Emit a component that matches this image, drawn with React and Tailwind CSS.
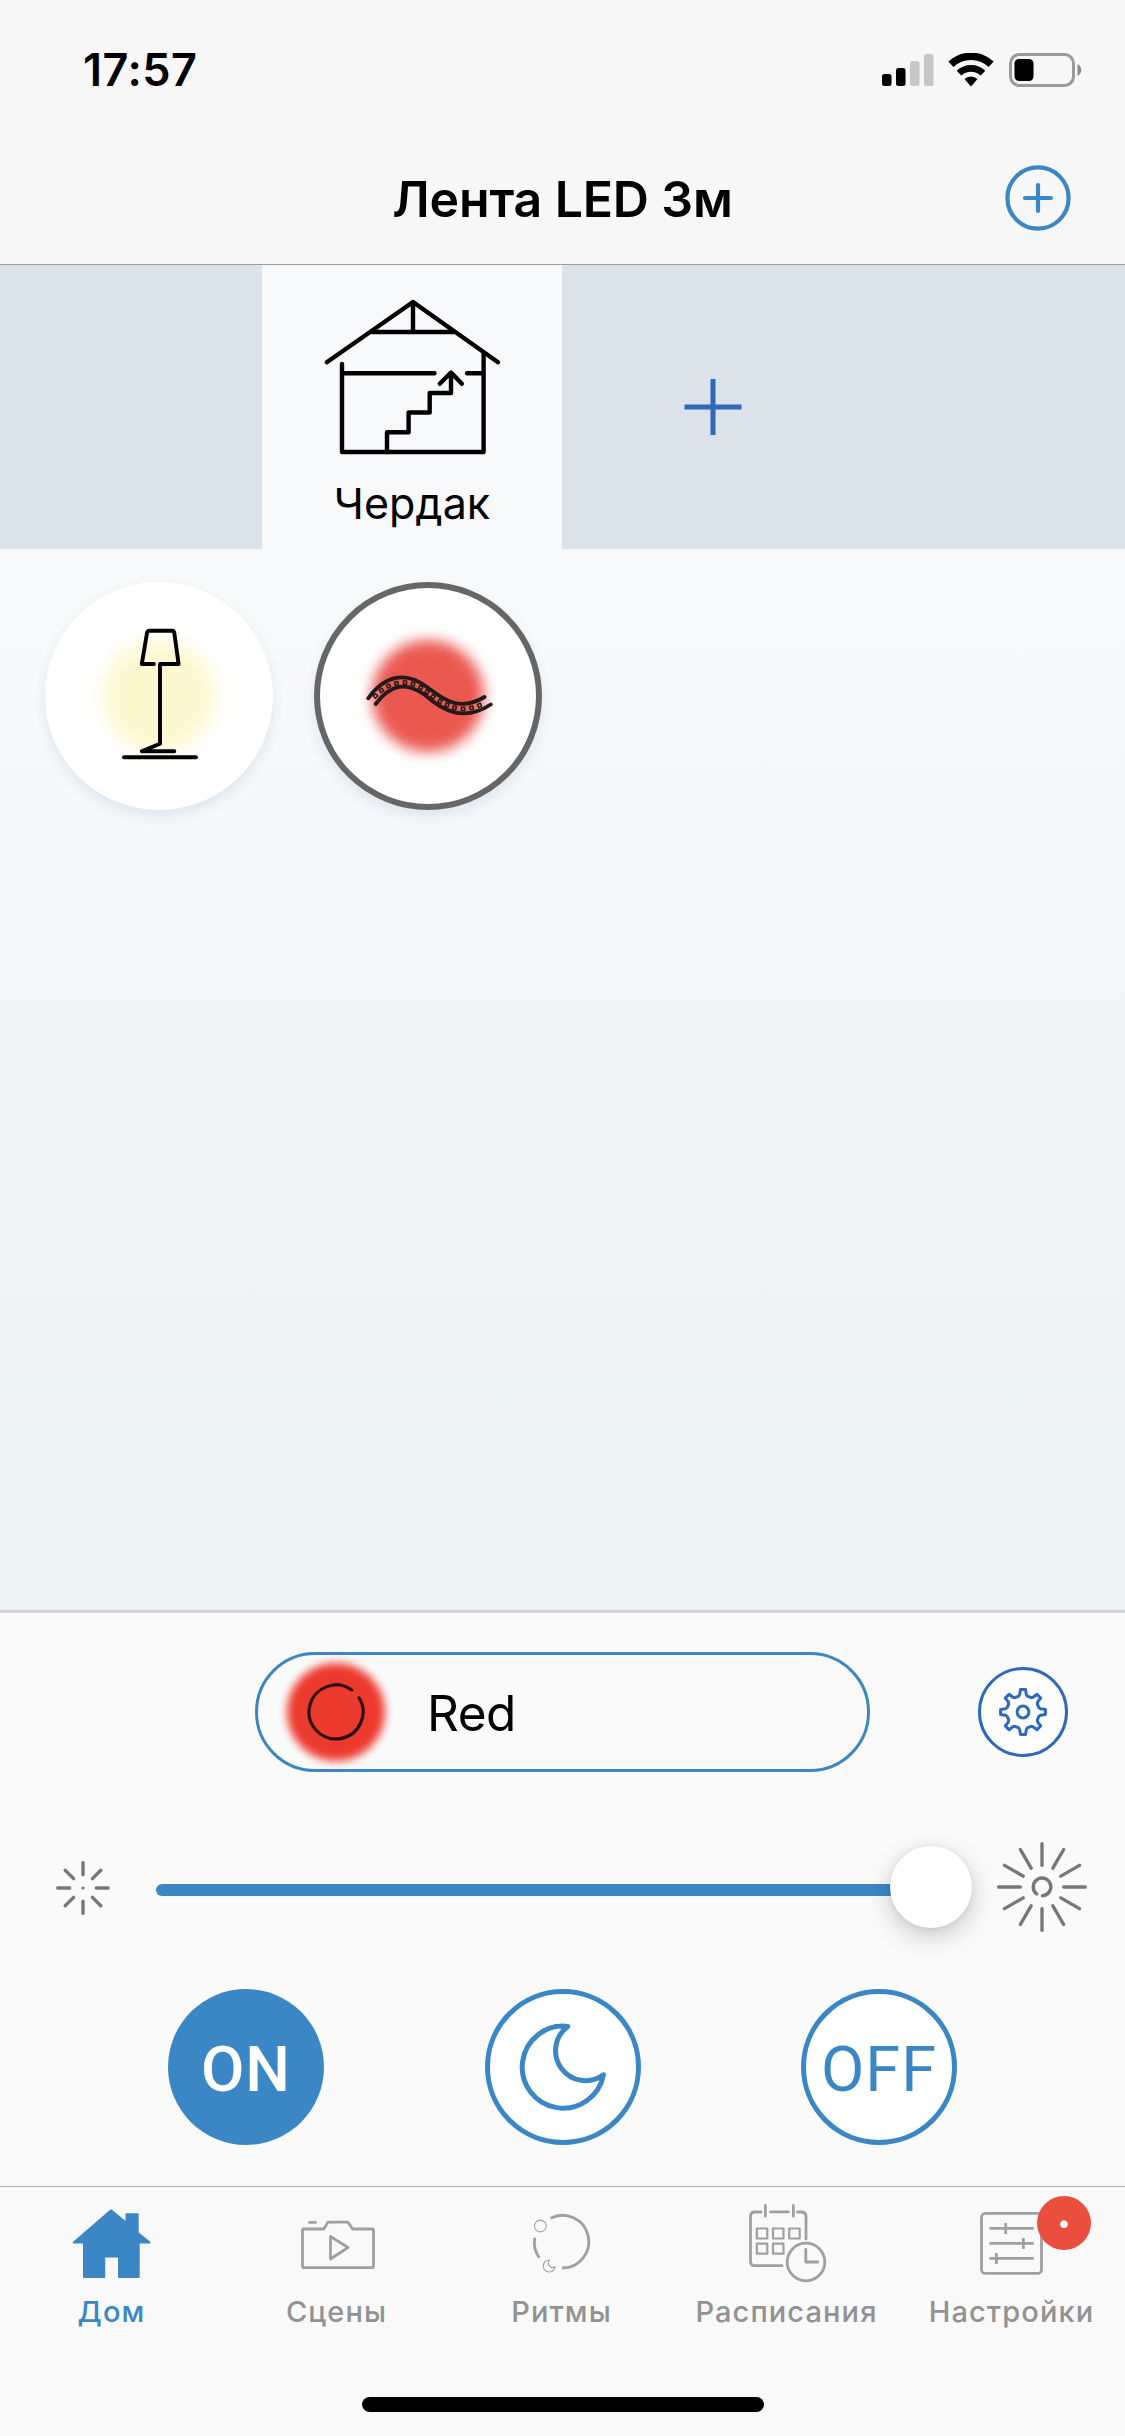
import { useState } from "react";

const gearPath = (() => {
  const pts = [];
  for (let i = 0; i < 8; i++) {
    const a = (i * Math.PI) / 4;
    // base, side, tip, tip, side, base of one tooth
    [[4.4, 15.8], [3.3, 17.5], [2.6, 22.4], [-2.6, 22.4], [-3.3, 17.5], [-4.4, 15.8]].forEach(([x, y]) => {
      pts.push(`${(x * Math.cos(a) - y * Math.sin(a)).toFixed(2)} ${(x * Math.sin(a) + y * Math.cos(a)).toFixed(2)}`);
    });
  }
  return `M${pts.join("L")}Z`;
})();

function Rays({ count, inner, outer }) {
  return Array.from({ length: count }, (_, i) => (
    <line key={i} x1="0" y1={-inner} x2="0" y2={-outer} transform={`rotate(${(i * 360) / count})`} />
  ));
}

function StatusBar() {
  return (
    <div className="flex h-[132px] items-center justify-between pt-[7px] pr-[43px] pl-[83px]">
      <span className="text-[45px] leading-none font-semibold tracking-[0.5px]">17:57</span>
      <div className="flex items-center">
        <svg width="52" height="34" viewBox="0 0 52 34">
          <rect x="0" y="21" width="9.5" height="12" rx="2.5" />
          <rect x="14" y="15" width="9.5" height="18" rx="2.5" />
          <rect x="28" y="8" width="9.5" height="25" rx="2.5" fill="#c6c6c6" />
          <rect x="42" y="1" width="9.5" height="32" rx="2.5" fill="#c6c6c6" />
        </svg>
        <svg className="ml-[14px]" width="46" height="34" viewBox="0 0 46 34" fill="none" stroke="#000">
          <path d="M2.9 11.3A29.3 29.3 0 0 1 43.1 11.3" strokeWidth="7.4" />
          <path d="M11 20.2A17.3 17.3 0 0 1 35 20.2" strokeWidth="6.6" />
          <path d="M23 33.4L16.5 26A9.6 9.6 0 0 1 29.5 26Z" fill="#000" stroke="none" />
        </svg>
        <svg className="ml-[15px]" width="73" height="34" viewBox="0 0 73 34">
          <rect x="1.5" y="1.5" width="63" height="31" rx="9" fill="none" stroke="#9a9a9a" strokeWidth="3" />
          <rect x="5.5" y="6" width="19" height="22" rx="4.5" />
          <path d="M68.5 11c5 2.500 5 9.500 0 12z" fill="#8a8a8a" />
        </svg>
      </div>
    </div>
  );
}

function AtticIcon() {
  return (
    <svg width="182" height="160" viewBox="321 298 182 160" fill="none" stroke="#000" strokeWidth="4.400" strokeLinecap="round" strokeLinejoin="round">
      <path d="M326.800 362.300L413 302L498 362.300M372 332H455M413 302V332" />
      <path d="M342 364V452H483.600V353M342 373.300H434.500M467 373.300H483.600" />
      <path d="M387 452V432.300H408.600V412.500H429.700V393H451V373M439.800 383.800L451 372.500L461.800 383.800" />
    </svg>
  );
}

function LampIcon() {
  return (
    <svg className="relative" width="80" height="136" viewBox="119 628 80 136" fill="none" stroke="#000" strokeWidth="3.900" strokeLinecap="round" strokeLinejoin="round">
      <path d="M153.900 664H141.800L147 633Q147.500 630.700 149.500 630.700H172Q174 630.700 174.300 633L178.600 664H160V743.700L141.800 751.300H174.300" />
      <path d="M124 757.300H196" />
    </svg>
  );
}

const ledDots = [
  [375.5, 696, -42], [381.5, 690.5, -38], [388.5, 686, -28], [396.5, 683.5, -14], [405, 682.7, 0],
  [413, 684, 12], [420.8, 687.5, 24], [427, 691.8, 32], [433, 696.8, 36], [440, 701.3, 30],
  [447, 705, 20], [454.5, 707.8, 10], [463, 708.9, 0], [471.5, 707.8, -10], [479.5, 705.3, -22],
];

function StripIcon() {
  return (
    <svg className="relative" width="130" height="44" viewBox="363 674 130 44" fill="none" stroke="#231a1a" strokeWidth="3.800" strokeLinecap="round" strokeLinejoin="round">
      <path d="M368.200 698.300C385 675 406 671 427 687C446 702 461 711 484.500 697" />
      <path d="M375.700 704C391 684 406 681.500 425 695C443 711 464 722 490.700 704.500" />
      {ledDots.map(([x, y, r]) => (
        <rect key={x} x={x - 1.6} y={y - 1.6} width="3.200" height="3.200" strokeWidth="1.500" transform={`rotate(${r} ${x} ${y})`} />
      ))}
    </svg>
  );
}

function Device({ selected, glow, onClick, children }) {
  return (
    <button
      onClick={onClick}
      className={`relative flex size-[228px] items-center justify-center rounded-full bg-white shadow-[0_6px_12px_#dde7ee] ${
        selected ? "border-[6px] border-[#666]" : ""
      }`}
    >
      <span className={`absolute size-[112px] rounded-full ${glow}`} />
      {children}
    </button>
  );
}

const tabs = [
  {
    label: "Дом",
    icon: (
      <g fill="currentColor" stroke="currentColor" strokeWidth="2" strokeLinejoin="round">
        <path d="M111 2210.300L126.500 2223V2214.200H137.700V2232.800L149.500 2242.500H138.700V2277H119V2256.500H104.200V2277H84V2242.500H73.800Z" />
      </g>
    ),
    x: 0,
  },
  {
    label: "Сцены",
    icon: (
      <>
        <path d="M303.500 2229H323.700L328 2222.200H348L352.700 2229H372.500Q373.500 2229 373.500 2230V2266.500Q373.500 2267.600 372.500 2267.600H303.500Q302.500 2267.600 302.500 2266.500V2230Q302.500 2229 303.500 2229Z" />
        <path d="M309.500 2222.400H315.500M330.500 2236.500V2259L348 2247.500Z" />
      </>
    ),
    x: 225,
  },
  {
    label: "Ритмы",
    icon: (
      <>
        <path strokeLinecap="butt" d="M550.500 2218.300A26.300 26.300 0 1 1 562.200 2268M534.800 2237.800A26.300 26.300 0 0 0 539.300 2257.800" />
        <circle cx="540.400" cy="2226" r="5.900" strokeWidth="1.100" />
        <path strokeWidth="1.100" d="M549.500 2260A6 6 0 1 0 555.200 2266.800A4.500 4.500 0 0 1 549.500 2260Z" />
      </>
    ),
    x: 450,
  },
  {
    label: "Расписания",
    icon: (
      <>
        <path d="M761 2212H755Q750.500 2212 750.500 2216.500V2261.200Q750.500 2265.700 755 2265.700H782M770.500 2211.800H788.500M797.500 2212H801.500Q806 2212 806 2216.500V2239" />
        <path d="M765.400 2205.500V2216.200M793.400 2205.500V2216.200" />
        <path
          strokeWidth="2.200"
          d="M756.800 2228.500h10.500v10h-10.500zM773 2228.500h10.500v10h-10.500zM789.200 2228.500h10.500v10h-10.500zM756.800 2243.700h10.500v10h-10.500zM773 2243.700h10.500v10h-10.500z"
        />
        <circle cx="806" cy="2262" r="18.800" />
        <path d="M805.800 2249.500V2262H817.700" />
      </>
    ),
    x: 675,
  },
  {
    label: "Настройки",
    icon: (
      <>
        <rect x="981.500" y="2213.400" width="60" height="60" rx="4" />
        <path strokeLinecap="butt" d="M989.500 2228.400H1033.700M989.500 2243.400H1033.700M989.500 2258.400H1033.700M1005.700 2223V2234M1023.400 2238V2249M996.400 2253V2264" />
      </>
    ),
    x: 900,
    badge: "•",
  },
];

export default function App() {
  const [device, setDevice] = useState("strip");
  const [tab, setTab] = useState("Дом");

  return (
    <div className="flex h-[2436px] w-[1125px] flex-col overflow-hidden bg-[#fafafa] font-[Inter,'Liberation_Sans',sans-serif] text-black">
      {/* Header */}
      <header className="h-[265px] border-b border-[#979da3] bg-[#f7f7f7]">
        <StatusBar />
        <div className="grid h-[132px] grid-cols-[1fr_auto_1fr] items-center pr-[54px] pl-[54px]">
          <h1 className="col-start-2 pt-[2px] text-[50px] leading-none font-semibold tracking-[-0.15px]">Лента LED 3м</h1>
          <button className="justify-self-end">
            <svg width="66" height="66" viewBox="-33 -33 66 66" fill="none" stroke="#3b87c5" strokeWidth="4.200" strokeLinecap="round">
              <circle r="30.600" />
              <path d="M-13 0H13M0 -13V13" />
            </svg>
          </button>
        </div>
      </header>

      {/* Rooms */}
      <div className="flex h-[284px] bg-[#dbe3ea]">
        <div className="w-[262px]" />
        <div className="flex w-[300px] flex-col items-center bg-[#f8f9fb] pt-[33px]">
          <AtticIcon />
          <span className="mt-[19px] text-[43px] leading-[52px] tracking-[0.1px]">Чердак</span>
        </div>
        <button className="flex w-[302px] items-center justify-center">
          <svg width="58" height="58" viewBox="-29 -29 58 58" stroke="#2f69bd" strokeWidth="5">
            <path d="M-28.500 0H28.500M0 -28V28" />
          </svg>
        </button>
      </div>

      {/* Devices */}
      <div className="flex h-[1061px] items-start gap-[41px] bg-linear-to-b from-[#f8f9fb] to-[#edf2f5] px-[45px] pt-[33px]">
        <Device selected={device === "lamp"} glow="bg-[#fdf8d0] blur-[9px]" onClick={() => setDevice("lamp")}>
          <LampIcon />
        </Device>
        <Device selected={device === "strip"} glow="bg-[#eb5850] blur-[7px]" onClick={() => setDevice("strip")}>
          <StripIcon />
        </Device>
      </div>

      {/* Controls */}
      <section className="h-[576px] border-t-[3px] border-[#d2d3d5] bg-[#fafafa] pt-[39px]">
        <div className="flex items-center pl-[255px]">
          <button className="flex h-[120px] w-[615px] items-center rounded-full border-[3px] border-[#3b87c5] pl-[28px]">
            <span className="relative flex size-[100px] items-center justify-center">
              <span className="absolute size-[98px] rounded-full bg-[#ec3a2e] blur-[4px]" />
              <svg className="relative" width="60" height="60" viewBox="-30 -30 60 60" fill="none" stroke="#2a0705" strokeWidth="3.100" strokeLinecap="round">
                <path d="M23 -14.200A27 27 0 1 1 16 -21.800" />
              </svg>
            </span>
            <span className="ml-[41px] pt-[3px] text-[49.500px] leading-none tracking-[-0.5px]">Red</span>
          </button>
          <button className="ml-[108px] flex size-[90px] items-center justify-center rounded-full border-[3px] border-[#2e69bc] bg-[#fdfdfd]">
            <svg width="52" height="52" viewBox="-26 -26 52 52" fill="none" stroke="#2e69bc" strokeWidth="3" strokeLinejoin="round">
              <path d={gearPath} />
              <circle r="5.900" />
            </svg>
          </button>
        </div>

        {/* Brightness */}
        <div className="mt-[70px] flex h-[90px] items-center pl-[55px] text-[#777]">
          <svg className="mt-px" width="56" height="56" viewBox="-28 -28 56 56" stroke="currentColor" strokeWidth="3.400" strokeLinecap="round">
            <Rays count={8} inner={13.3} outer={25.2} />
            <circle r="1.600" fill="currentColor" stroke="none" />
          </svg>
          <div className="relative ml-[45px] flex h-[82px] w-[816px] items-center">
            <div className="mt-[6px] h-3 w-[780px] rounded-full bg-[#3b87c5]" />
            <div className="absolute right-0 size-[82px] rounded-full bg-white shadow-[0_8px_26px_rgba(0,0,0,0.2),0_1px_6px_rgba(0,0,0,0.08)]" />
          </div>
          <svg className="ml-[24px]" width="92" height="92" viewBox="-46 -46 92 92" fill="none" stroke="currentColor" strokeWidth="3.400" strokeLinecap="round">
            <Rays count={12} inner={21.7} outer={43.3} />
            <path d="M-5.200 7A8.800 8.800 0 1 1 0.500 8.700" />
          </svg>
        </div>

        {/* Power */}
        <div className="mt-[57px] flex gap-[160.500px] pl-[168px] font-[Roboto,sans-serif] text-[63px] leading-none text-[#3b87c5]">
          <button className="flex size-[156px] items-center justify-center rounded-full bg-[#3b87c5] pt-1 font-medium tracking-[1px] text-white">ON</button>
          <button className="flex size-[156px] items-center justify-center rounded-full border-5 border-[#3b87c5] bg-white">
            <svg width="94" height="94" viewBox="516 2020 94 94" fill="none" stroke="currentColor" strokeWidth="5" strokeLinejoin="round">
              <path d="M567.800 2026.400A41 41 0 1 0 603.500 2074.800A30 30 0 0 1 567.800 2026.400Z" />
            </svg>
          </button>
          <button className="flex size-[156px] items-center justify-center rounded-full border-5 border-[#3b87c5] bg-white pt-1 tracking-[1px]">OFF</button>
        </div>
      </section>

      {/* Tab bar */}
      <footer className="flex h-[250px] flex-col items-center border-t border-[#b2b2b2] bg-[#f9f9f9]">
        <nav className="grid w-full grid-cols-5">
          {tabs.map((t) => (
            <button
              key={t.label}
              onClick={() => setTab(t.label)}
              className={`relative flex flex-col items-center ${tab === t.label ? "text-[#3b87c5]" : "text-[#929292]"}`}
            >
              <svg
                className={tab === t.label ? "" : "text-[#a0a0a0]"}
                width="225"
                height="105"
                viewBox={`${t.x} 2187 225 105`}
                fill="none"
                stroke="currentColor"
                strokeWidth="2.800"
                strokeLinecap="round"
                strokeLinejoin="round"
              >
                {t.icon}
              </svg>
              <span className="pr-[2px] text-[29px] leading-[40px] font-medium tracking-[1.1px]">{t.label}</span>
              {t.badge && (
                <span className="absolute top-[9px] left-[137px] flex size-[54px] items-center justify-center rounded-full bg-[#ea4f3d] text-[24px] leading-none text-white">
                  {t.badge}
                </span>
              )}
            </button>
          ))}
        </nav>
        <div className="mt-[65px] h-[15px] w-[402px] rounded-full bg-black" />
      </footer>
    </div>
  );
}
